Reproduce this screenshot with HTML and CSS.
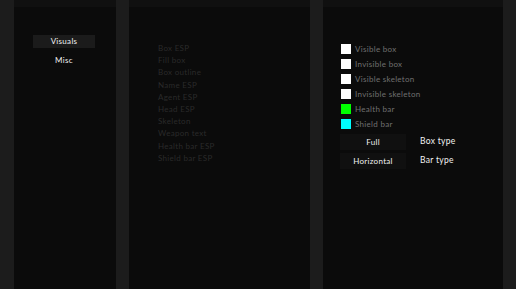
FILE: index.html
```html
<!DOCTYPE html>
<html lang="en">
<head>
    <meta charset="UTF-8">
    <title>Menu</title>
    <link rel="stylesheet" href="styles.css">
</head>
<body>
    <div class="menu">
        <div class="panel tabs">
            <div class="tab active">Visuals</div>
            <div class="tab">Misc</div>
        </div>

        <div class="panel options">
            <div class="check">Box ESP</div>
            <div class="check">Fill box</div>
            <div class="check">Box outline</div>
            <div class="check">Name ESP</div>
            <div class="check">Agent ESP</div>
            <div class="check">Head ESP</div>
            <div class="check">Skeleton</div>
            <div class="check">Weapon text</div>
            <div class="check">Health bar ESP</div>
            <div class="check">Shield bar ESP</div>
        </div>

        <div class="panel colors">
            <div class="color"><span class="swatch white"></span>Visible box</div>
            <div class="color"><span class="swatch white"></span>Invisible box</div>
            <div class="color"><span class="swatch white"></span>Visible skeleton</div>
            <div class="color"><span class="swatch white"></span>Invisible skeleton</div>
            <div class="color"><span class="swatch green"></span>Health bar</div>
            <div class="color"><span class="swatch cyan"></span>Shield bar</div>

            <div class="combo first">
                <div class="combo-box">Full</div>
                <span class="combo-label">Box type</span>
            </div>
            <div class="combo">
                <div class="combo-box">Horizontal</div>
                <span class="combo-label">Bar type</span>
            </div>
        </div>
    </div>
</body>
</html>
```

FILE: styles.css
```css
:root {
    --bg: #1c1c1c;
    --panel: #0b0b0b;
    --panel-top: #101010;
    --text: #f2f2f2;
    --muted: #707070;
    --dim: #2a2a2a;
}

html, body {
    margin: 0;
    padding: 0;
    height: 100%;
}

body {
    background-color: var(--bg);
    font-family: 'Lato', sans-serif;
    font-size: 8px;
    letter-spacing: 0.3px;
    color: var(--text);
    overflow: hidden;
}

.menu {
    display: flex;
    height: 289px;
    padding: 0 13px 0 14px;
    gap: 13px;
    box-sizing: border-box;
}

.panel {
    background: linear-gradient(to bottom, var(--panel-top) 0, var(--panel-top) 7px, var(--panel) 7px);
    height: 100%;
    box-sizing: border-box;
}

.tabs {
    width: 102px;
    padding: 35px 0 0 19px;
}

.tab {
    width: 62px;
    height: 13px;
    line-height: 13px;
    text-align: center;
    margin-bottom: 6px;
}

.tab.active {
    background-color: #1b1b1b;
}

.options {
    width: 181px;
    padding: 42px 0 0 29px;
}

.check {
    height: 12.2px;
    line-height: 12px;
    color: var(--dim);
}

.colors {
    width: 180px;
    padding: 41px 0 0 18px;
}

.color {
    display: flex;
    align-items: center;
    height: 15px;
    color: var(--muted);
}

.swatch {
    width: 10px;
    height: 10px;
    margin-right: 4px;
}

.swatch.white { background-color: #ffffff; }
.swatch.green { background-color: #00ff00; }
.swatch.cyan { background-color: #00ffff; }

.combo {
    display: flex;
    align-items: center;
    margin-top: 3px;
}

.combo.first {
    margin-top: 3px;
}

.combo-box {
    width: 66px;
    height: 16px;
    line-height: 16px;
    background-color: #101010;
    text-align: center;
    margin-right: 14px;
    margin-left: -1px;
}

.combo-label {
    font-size: 8.5px;
    margin-top: -3px;
}
```
